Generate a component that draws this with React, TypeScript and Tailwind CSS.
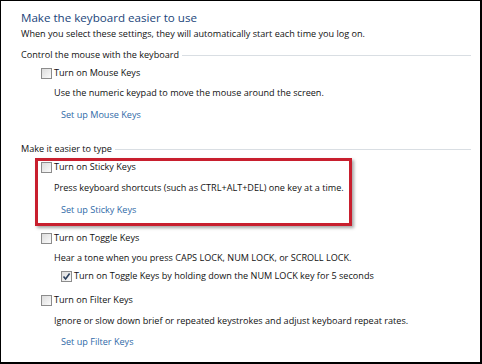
import React from 'react';

// Ease of Access - keyboard settings page (Windows 7 style)

function Checkbox({ checked = false }: { checked?: boolean }) {
  return (
    <span className="relative inline-flex h-[11px] w-[11px] shrink-0 items-center justify-center border border-[#8c8c8c] bg-gradient-to-br from-[#dcdcdc] to-[#fbfbfb]">
      {checked && (
        <svg width="9" height="9" viewBox="0 0 9 9" className="absolute">
          <path d="M1.5 4.5 L3.6 7 L7.6 1.6" fill="none" stroke="#2b3f5c" strokeWidth="1.6" />
        </svg>
      )}
    </span>
  );
}

function SectionHeader({ label, className }: { label: string; className?: string }) {
  return (
    <div className={`flex h-[14px] items-center pr-[9px] ${className ?? ''}`}>
      <span className="whitespace-nowrap">{label}</span>
      <div className="ml-[3px] h-px flex-1 bg-[#d9dee3]" />
    </div>
  );
}

function CheckRow({ label, checked, className }: { label: string; checked?: boolean; className?: string }) {
  return (
    <div className={`flex h-[14px] items-center gap-[2px] ${className ?? ''}`}>
      <Checkbox checked={checked} />
      <span className="whitespace-nowrap">{label}</span>
    </div>
  );
}

function Line({ children, className }: { children: React.ReactNode; className?: string }) {
  return <div className={`flex h-[14px] items-center whitespace-nowrap ${className ?? ''}`}>{children}</div>;
}

function LinkLine({ children, className }: { children: React.ReactNode; className?: string }) {
  return (
    <div className={`flex h-[14px] items-center whitespace-nowrap text-[#2f6aa8] ${className ?? ''}`}>{children}</div>
  );
}

export default function App() {
  return (
    <div
      className="relative h-[364px] w-[482px] overflow-hidden border-t border-l border-r-2 border-b-2 border-black bg-white text-[9.1px] text-[#111]"
      style={{ fontFamily: '"Open Sans", "Noto Sans", sans-serif' }}
    >
      <div className="flex flex-col pl-[20px] pt-[8px]">
        <div className="flex h-[18px] items-center text-[11.6px] text-[#21457a]">Make the keyboard easier to use</div>
        <Line>When you select these settings, they will automatically start each time you log on.</Line>

        <SectionHeader label="Control the mouse with the keyboard" className="mt-[7px]" />
        <CheckRow label="Turn on Mouse Keys" className="ml-[20px] mt-[4px]" />
        <Line className="ml-[33px] mt-[6px]">Use the numeric keypad to move the mouse around the screen.</Line>
        <LinkLine className="ml-[40px] mt-[8px]">Set up Mouse Keys</LinkLine>

        <SectionHeader label="Make it easier to type" className="mt-[20px]" />
        <CheckRow label="Turn on Sticky Keys" className="ml-[20px] mt-[4px]" />
        <Line className="ml-[33px] mt-[7px]">Press keyboard shortcuts (such as CTRL+ALT+DEL) one key at a time.</Line>
        <LinkLine className="ml-[40px] mt-[8px]">Set up Sticky Keys</LinkLine>

        <CheckRow label="Turn on Toggle Keys" className="ml-[20px] mt-[14px]" />
        <Line className="ml-[33px] mt-[6px]">Hear a tone when you press CAPS LOCK, NUM LOCK, or SCROLL LOCK.</Line>
        <CheckRow
          checked
          label="Turn on Toggle Keys by holding down the NUM LOCK key for 5 seconds"
          className="ml-[40px] mt-[4px]"
        />

        <CheckRow label="Turn on Filter Keys" className="ml-[20px] mt-[10px]" />
        <Line className="ml-[33px] mt-[7px]">Ignore or slow down brief or repeated keystrokes and adjust keyboard repeat rates.</Line>
        <LinkLine className="ml-[40px] mt-[7px]">Set up Filter Keys</LinkLine>
      </div>

      {/* red highlight around sticky keys */}
      <div className="pointer-events-none absolute left-[34px] top-[157px] h-[68px] w-[317px] border-[3px] border-[#c81f2e] shadow-[2px_2px_3px_rgba(0,0,0,0.35)]" />
    </div>
  );
}
